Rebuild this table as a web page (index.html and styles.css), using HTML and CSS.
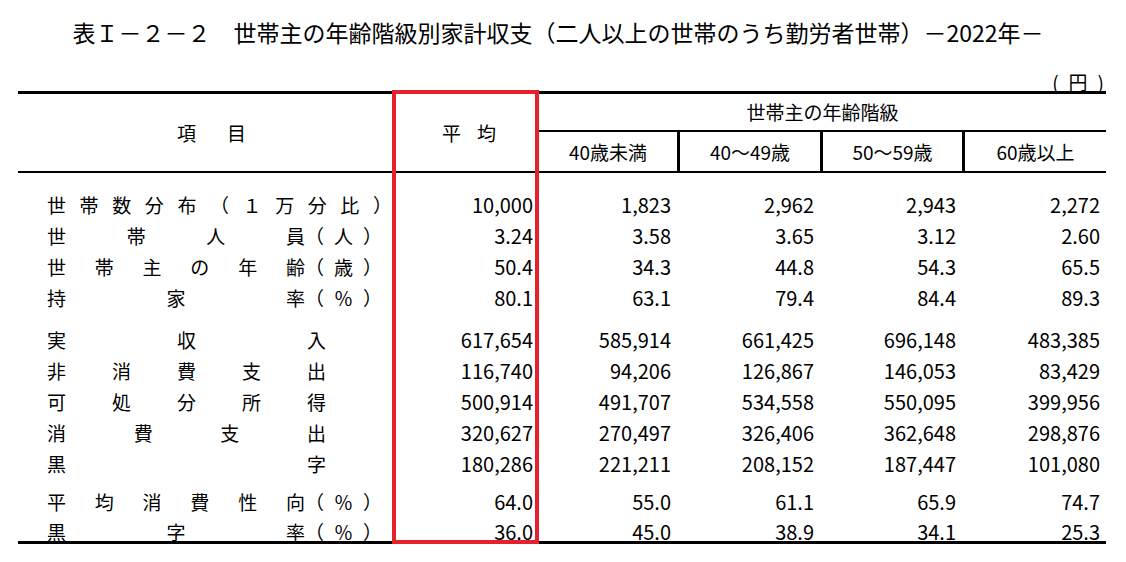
FILE: index.html
```html
<!DOCTYPE html>
<html lang="ja">
<head>
<meta charset="utf-8">
<title>世帯主の年齢階級別家計収支</title>
<link rel="stylesheet" href="styles.css">
</head>
<body>
<div class="page">
  <h1 class="title">表Ｉ－２－２　世帯主の年齢階級別家計収支（二人以上の世帯のうち勤労者世帯）－2022年－</h1>
  <div class="unit">(円)</div>
  <div class="table-wrap">
    <table class="stats">
      <colgroup>
        <col class="c-label"><col class="c-avg"><col class="c-a1"><col class="c-a2"><col class="c-a3"><col class="c-a4">
      </colgroup>
      <thead>
        <tr>
          <th rowspan="2" class="th-item">項目</th>
          <th rowspan="2" class="th-avg">平均</th>
          <th colspan="4" class="th-group">世帯主の年齢階級</th>
        </tr>
        <tr>
          <th class="th-age">40歳未満</th>
          <th class="th-age sep">40～49歳</th>
          <th class="th-age sep">50～59歳</th>
          <th class="th-age sep">60歳以上</th>
        </tr>
      </thead>
      <tbody>
        <tr class="first">
          <td class="label"><div class="lbl"><span class="main wide"><span>世</span><span>帯</span><span>数</span><span>分</span><span>布</span><span>（</span><span>１</span><span>万</span><span>分</span><span>比</span><span>）</span></span></div></td>
          <td class="num">10,000</td><td class="num">1,823</td><td class="num">2,962</td><td class="num">2,943</td><td class="num">2,272</td>
        </tr>
        <tr>
          <td class="label"><div class="lbl"><span class="main"><span>世</span><span>帯</span><span>人</span><span>員</span></span><span class="suf">（人）</span></div></td>
          <td class="num">3.24</td><td class="num">3.58</td><td class="num">3.65</td><td class="num">3.12</td><td class="num">2.60</td>
        </tr>
        <tr>
          <td class="label"><div class="lbl"><span class="main"><span>世</span><span>帯</span><span>主</span><span>の</span><span>年</span><span>齢</span></span><span class="suf">（歳）</span></div></td>
          <td class="num">50.4</td><td class="num">34.3</td><td class="num">44.8</td><td class="num">54.3</td><td class="num">65.5</td>
        </tr>
        <tr>
          <td class="label"><div class="lbl"><span class="main"><span>持</span><span>家</span><span>率</span></span><span class="suf">（％）</span></div></td>
          <td class="num">80.1</td><td class="num">63.1</td><td class="num">79.4</td><td class="num">84.4</td><td class="num">89.3</td>
        </tr>
        <tr class="gap">
          <td class="label"><div class="lbl"><span class="main"><span>実</span><span>収</span><span>入</span></span></div></td>
          <td class="num">617,654</td><td class="num">585,914</td><td class="num">661,425</td><td class="num">696,148</td><td class="num">483,385</td>
        </tr>
        <tr>
          <td class="label"><div class="lbl"><span class="main"><span>非</span><span>消</span><span>費</span><span>支</span><span>出</span></span></div></td>
          <td class="num">116,740</td><td class="num">94,206</td><td class="num">126,867</td><td class="num">146,053</td><td class="num">83,429</td>
        </tr>
        <tr>
          <td class="label"><div class="lbl"><span class="main"><span>可</span><span>処</span><span>分</span><span>所</span><span>得</span></span></div></td>
          <td class="num">500,914</td><td class="num">491,707</td><td class="num">534,558</td><td class="num">550,095</td><td class="num">399,956</td>
        </tr>
        <tr>
          <td class="label"><div class="lbl"><span class="main"><span>消</span><span>費</span><span>支</span><span>出</span></span></div></td>
          <td class="num">320,627</td><td class="num">270,497</td><td class="num">326,406</td><td class="num">362,648</td><td class="num">298,876</td>
        </tr>
        <tr>
          <td class="label"><div class="lbl"><span class="main"><span>黒</span><span>字</span></span></div></td>
          <td class="num">180,286</td><td class="num">221,211</td><td class="num">208,152</td><td class="num">187,447</td><td class="num">101,080</td>
        </tr>
        <tr class="gap-b">
          <td class="label"><div class="lbl"><span class="main"><span>平</span><span>均</span><span>消</span><span>費</span><span>性</span><span>向</span></span><span class="suf">（％）</span></div></td>
          <td class="num">64.0</td><td class="num">55.0</td><td class="num">61.1</td><td class="num">65.9</td><td class="num">74.7</td>
        </tr>
        <tr class="last">
          <td class="label"><div class="lbl"><span class="main"><span>黒</span><span>字</span><span>率</span></span><span class="suf">（％）</span></div></td>
          <td class="num">36.0</td><td class="num">45.0</td><td class="num">38.9</td><td class="num">34.1</td><td class="num">25.3</td>
        </tr>
      </tbody>
    </table>
    <div class="highlight"></div>
  </div>
</div>
</body>
</html>
```

FILE: styles.css
```css
* { box-sizing: border-box; }

html, body {
  margin: 0;
  padding: 0;
  background: #fff;
}

body {
  color: #000;
  font-family: "Liberation Sans Narrow", "Noto Sans CJK JP", sans-serif;
  font-size: 19px;
}

.page {
  width: 1126px;
  height: 562px;
  overflow: hidden;
}

.title {
  margin: 0;
  padding: 18px 10px 0 0;
  font-size: 23px;
  line-height: 28px;
  font-weight: normal;
  text-align: center;
  white-space: nowrap;
}

.unit {
  margin-top: 26px;
  padding-right: 12px;
  line-height: 19px;
  text-align: right;
  letter-spacing: 10px;
}

.table-wrap {
  position: relative;
  margin-left: 18px;
  width: 1088px;
}

.stats {
  border-collapse: separate;
  border-spacing: 0;
  table-layout: fixed;
  width: 1088px;
}

.c-label { width: 374px; }
.c-avg { width: 147px; }
.c-a1 { width: 138px; }
.c-a2 { width: 143px; }
.c-a3 { width: 142px; }
.c-a4 { width: 144px; }

.stats th {
  font-weight: normal;
  padding: 0;
  white-space: nowrap;
}

.th-item,
.th-avg {
  border-top: 3px solid #000;
  border-bottom: 2px solid #000;
  vertical-align: middle;
}

.th-item {
  padding-left: 44px !important;
  letter-spacing: 31px;
  text-align: center;
}

.th-avg {
  padding-left: 23px !important;
  letter-spacing: 16px;
  text-align: center;
}

.th-group {
  border-top: 3px solid #000;
  border-bottom: 2px solid #000;
  line-height: 36px;
  text-align: center;
}

.th-age {
  line-height: 39px;
  border-bottom: 2px solid #000;
  text-align: center;
}

.th-age.sep {
  border-left: 3px solid #000;
}

.stats td {
  padding: 0;
  line-height: 31px;
  white-space: nowrap;
}

.stats tr.first td { padding-top: 16px; }
.stats tr.gap td { padding-top: 11px; }
.stats tr.gap-b td {
  padding-top: 3px;
  line-height: 40px;
}
.stats tr.last td {
  line-height: 19px;
  border-bottom: 3px solid #000;
}

.num {
  text-align: right;
  padding-right: 6px !important;
  font-size: 20px;
}

.lbl {
  display: flex;
  padding-left: 29px;
}

.main {
  display: flex;
  justify-content: space-between;
  width: 279px;
}

.main.wide {
  width: 355px;
}

.suf {
  letter-spacing: 10px;
}

.highlight {
  position: absolute;
  left: 374px;
  top: -1px;
  width: 147px;
  height: 454px;
  border: 4px solid #e7212b;
  pointer-events: none;
}
```
